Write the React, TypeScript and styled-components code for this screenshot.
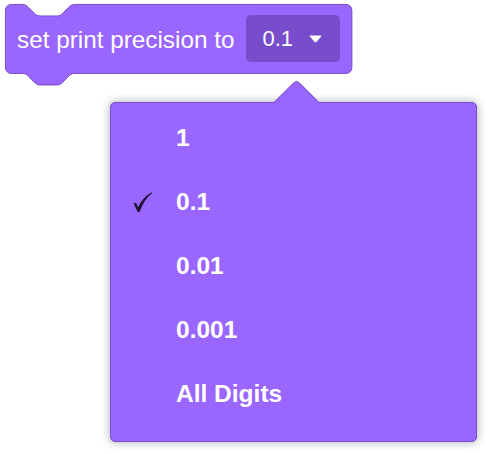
import React from "react";
import styled, { createGlobalStyle } from "styled-components";

const Global = createGlobalStyle`
  html, body { margin: 0; padding: 0; background: #ffffff; }
  body { font-family: "Liberation Sans", Arial, Helvetica, sans-serif; }
  #root { width: 490px; height: 454px; position: relative; overflow: hidden; }
`;

const Page = styled.div`
  position: relative;
  width: 490px;
  height: 454px;
  padding: 4px 0 0 5px;
  box-sizing: border-box;
`;

const Block = styled.div`
  position: relative;
  width: 347px;
  height: 69px;
`;

const BlockShape = styled.svg`
  position: absolute;
  left: -1.44px;
  top: -1.44px;
  width: 349.3px;
  height: 83.4px;
  z-index: 0;
`;

const BlockContent = styled.div`
  position: relative;
  z-index: 1;
  height: 100%;
  display: flex;
  align-items: center;
  gap: 12px;
  padding: 0 11px 0 12px;
  box-sizing: border-box;
`;

const Label = styled.span`
  color: #ffffff;
  font-size: 24.3px;
  white-space: nowrap;
  transform: translateY(1px);
`;

const Field = styled.div`
  width: 94px;
  height: 47px;
  border-radius: 5px;
  background: #774dcb;
  display: flex;
  align-items: center;
  padding-left: 16px;
  box-sizing: border-box;
  gap: 16px;
`;

const FieldText = styled.span`
  color: #ffffff;
  font-size: 22px;
  white-space: nowrap;
`;

const Menu = styled.div`
  position: absolute;
  left: 110px;
  top: 102px;
  width: 367px;
  height: 340px;
  box-sizing: border-box;
  background: #9966ff;
  border: 1px solid #774dcb;
  border-radius: 5px;
  box-shadow: 0 0 8px 1px rgba(0, 0, 0, 0.28);
  padding: 3px 0 0 22px;
  display: flex;
  flex-direction: column;
`;

const Arrow = styled.div`
  position: absolute;
  left: 169px;
  top: -17.5px;
  width: 33px;
  height: 33px;
  background: #9966ff;
  border-top: 1px solid #774dcb;
  border-left: 1px solid #774dcb;
  border-top-left-radius: 5px;
  transform: rotate(45deg);
  box-sizing: border-box;
`;

const Item = styled.div`
  position: relative;
  z-index: 1;
  height: 64px;
  display: grid;
  grid-template-columns: 43px auto;
  align-items: center;
`;

const Check = styled.svg<{ $on: boolean }>`
  visibility: ${(p) => (p.$on ? "visible" : "hidden")};
  width: 20px;
  height: 21px;
`;

const ItemText = styled.span`
  color: #ffffff;
  font-weight: 700;
  font-size: 24.5px;
  white-space: nowrap;
`;

const items = ["1", "0.1", "0.01", "0.001", "All Digits"];

export default function App() {
  return (
    <Page>
      <Global />
      <Block>
        <BlockShape viewBox="-1 -1 243 58">
          <path
            d="M0,4 A4,4 0 0 1 4,0 H12 c2,0 3,1 4,2 l4,4 c1,1 2,2 4,2 h12 c2,0 3,-1 4,-2 l4,-4 c1,-1 2,-2 4,-2 H237 a4,4 0 0 1 4,4 V44 a4,4 0 0 1 -4,4 H48 c-2,0 -3,1 -4,2 l-4,4 c-1,1 -2,2 -4,2 h-12 c-2,0 -3,-1 -4,-2 l-4,-4 c-1,-1 -2,-2 -4,-2 H4 a4,4 0 0 1 -4,-4 z"
            fill="#9966ff"
            stroke="#774dcb"
            strokeWidth={1}
            vectorEffect="non-scaling-stroke"
          />
        </BlockShape>
        <BlockContent>
          <Label>set print precision to</Label>
          <Field>
            <FieldText>0.1</FieldText>
            <svg width="13" height="8" viewBox="0 0 13 8">
              <path d="M1.2,0.6 H11.8 Q12.8,0.6 12.1,1.5 L7.4,6.9 Q6.5,7.8 5.6,6.9 L0.9,1.5 Q0.2,0.6 1.2,0.6 z" fill="#ffffff" />
            </svg>
          </Field>
        </BlockContent>
      </Block>
      <Menu>
        <Arrow />
        {items.map((it) => (
          <Item key={it}>
            <Check $on={it === "0.1"} viewBox="0 0 20 21">
              <path
                d="M0.6,11.2 C1.6,10.4 2.8,10.6 3.6,12 L5.2,15.2 C8,9.4 12.4,3.6 18.6,0.6 C19.2,0.4 19.5,0.9 19,1.3 C13.4,5.6 9.6,12 7,19.2 C6.6,20.4 5,20.6 4.4,19.6 Z"
                fill="rgba(22,12,34,0.92)"
              />
            </Check>
            <ItemText>{it}</ItemText>
          </Item>
        ))}
      </Menu>
    </Page>
  );
}
